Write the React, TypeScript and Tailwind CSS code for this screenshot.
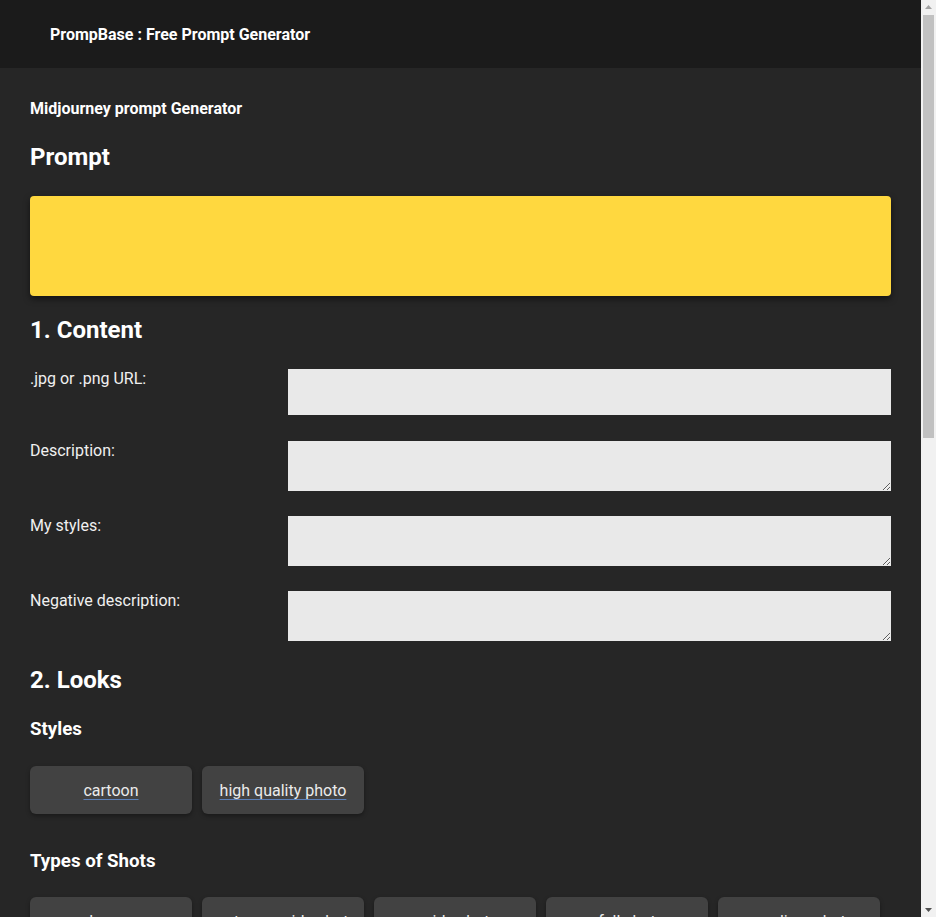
import React from 'react';

const shots = ['close-up', 'extreme wide shot', 'wide shot', 'full shot', 'medium shot', 'medium close-up', 'extreme close-up', 'over the shoulder', 'low angle shot', 'aerial view'];

const more: { title: string; items: string[] }[] = [
  { title: 'Lighting', items: ['soft light', 'hard light', 'golden hour', 'blue hour', 'studio lighting', 'neon lighting', 'backlight', 'rim light', 'volumetric light', 'cinematic lighting'] },
  { title: 'Camera', items: ['Canon EOS R5', 'Nikon D850', 'Sony A7 III', 'Leica M10', 'Polaroid'] },
  { title: 'Colors', items: ['black and white', 'sepia', 'pastel', 'vibrant', 'muted', 'monochrome', 'neon', 'warm tones', 'cool tones', 'high contrast'] },
  { title: 'Artists', items: ['Van Gogh', 'Monet', 'Picasso', 'Dali', 'Hokusai', 'Klimt', 'Rembrandt', 'Warhol', 'Mucha', 'Banksy'] },
  { title: 'Mood', items: ['calm', 'dramatic', 'mysterious', 'joyful', 'dark'] },
];

function Chip({ label }: { label: string }) {
  return (
    <a
      href="#"
      className="w-[162px] h-[48px] pt-[2px] rounded-[6px] bg-[#424242] shadow-[0_2px_4px_rgba(0,0,0,0.35)] flex items-center justify-center text-[16px] text-[#ebebeb] underline decoration-[#5b7fb8] underline-offset-[3px]"
    >
      {label}
    </a>
  );
}

function Field({ label, area }: { label: string; area?: boolean }) {
  return (
    <div className="flex">
      <label className="w-[258px] shrink-0 text-[16px] leading-[20px] text-[#f0f0f0]">{label}</label>
      {area ? (
        <textarea className="flex-1 h-[50px] bg-[#e9e9e9] outline-none border-0 block" />
      ) : (
        <input className="flex-1 h-[46px] bg-[#e9e9e9] outline-none border-0 block" />
      )}
    </div>
  );
}

// classic scrollbar strip, drawn since the headless page hides its own
function Scrollbar() {
  return (
    <div className="w-[15px] shrink-0 bg-[#f1f1f1] flex flex-col items-center">
      <svg width="15" height="15" viewBox="0 0 15 15" className="shrink-0">
        <path d="M4 9 L7.5 5 L11 9 Z" fill="#a3a3a3" />
      </svg>
      <div className="w-[11px] h-[423px] bg-[#c1c1c1] shrink-0" />
      <div className="flex-1" />
      <svg width="15" height="15" viewBox="0 0 15 15" className="shrink-0">
        <path d="M4 6 L11 6 L7.5 10 Z" fill="#505050" />
      </svg>
    </div>
  );
}

export default function App() {
  return (
    <div className="h-screen flex overflow-hidden bg-[#262626]">
      <div className="flex-1 min-w-0 overflow-hidden text-white" style={{ fontFamily: 'Roboto, "Liberation Sans", sans-serif' }}>
        <header className="h-[68px] pt-[2px] bg-[#1b1b1b] flex items-center px-[50px]">
          <span className="text-[16px] font-bold">PrompBase : Free Prompt Generator</span>
        </header>
        <main className="p-[30px]">
          <div className="text-[16px] leading-[22px] font-bold">Midjourney prompt Generator</div>
          <h1 className="mt-[23px] text-[24px] leading-[28px] font-bold">Prompt</h1>
          <div className="mt-[25px] h-[100px] rounded-[4px] bg-[#ffd83f] shadow-[0_3px_6px_rgba(0,0,0,0.5)]" />

          <h2 className="mt-[20px] text-[24px] leading-[28px] font-bold">1. Content</h2>
          <div className="mt-[25px] flex flex-col">
            <Field label=".jpg or .png URL:" />
            <div className="h-[26px]" />
            <Field label="Description:" area />
            <div className="h-[25px]" />
            <Field label="My styles:" area />
            <div className="h-[25px]" />
            <Field label="Negative description:" area />
          </div>

          <h2 className="mt-[25px] text-[24px] leading-[28px] font-bold">2. Looks</h2>
          <h3 className="mt-[23px] text-[18.72px] leading-[24px] font-bold">Styles</h3>
          <div className="mt-[25px] flex flex-wrap gap-[10px]">
            <Chip label="cartoon" />
            <Chip label="high quality photo" />
          </div>

          <h3 className="mt-[35px] text-[18.72px] leading-[24px] font-bold">Types of Shots</h3>
          <div className="mt-[24px] flex flex-wrap gap-[10px]">
            {shots.map((s) => <Chip key={s} label={s} />)}
          </div>

          {more.map((sec) => (
            <div key={sec.title}>
              <h3 className="mt-[35px] text-[18.72px] leading-[24px] font-bold">{sec.title}</h3>
              <div className="mt-[24px] flex flex-wrap gap-[10px]">
                {sec.items.map((s) => <Chip key={s} label={s} />)}
              </div>
            </div>
          ))}
          <div className="h-[40px]" />
        </main>
      </div>
      <Scrollbar />
    </div>
  );
}
